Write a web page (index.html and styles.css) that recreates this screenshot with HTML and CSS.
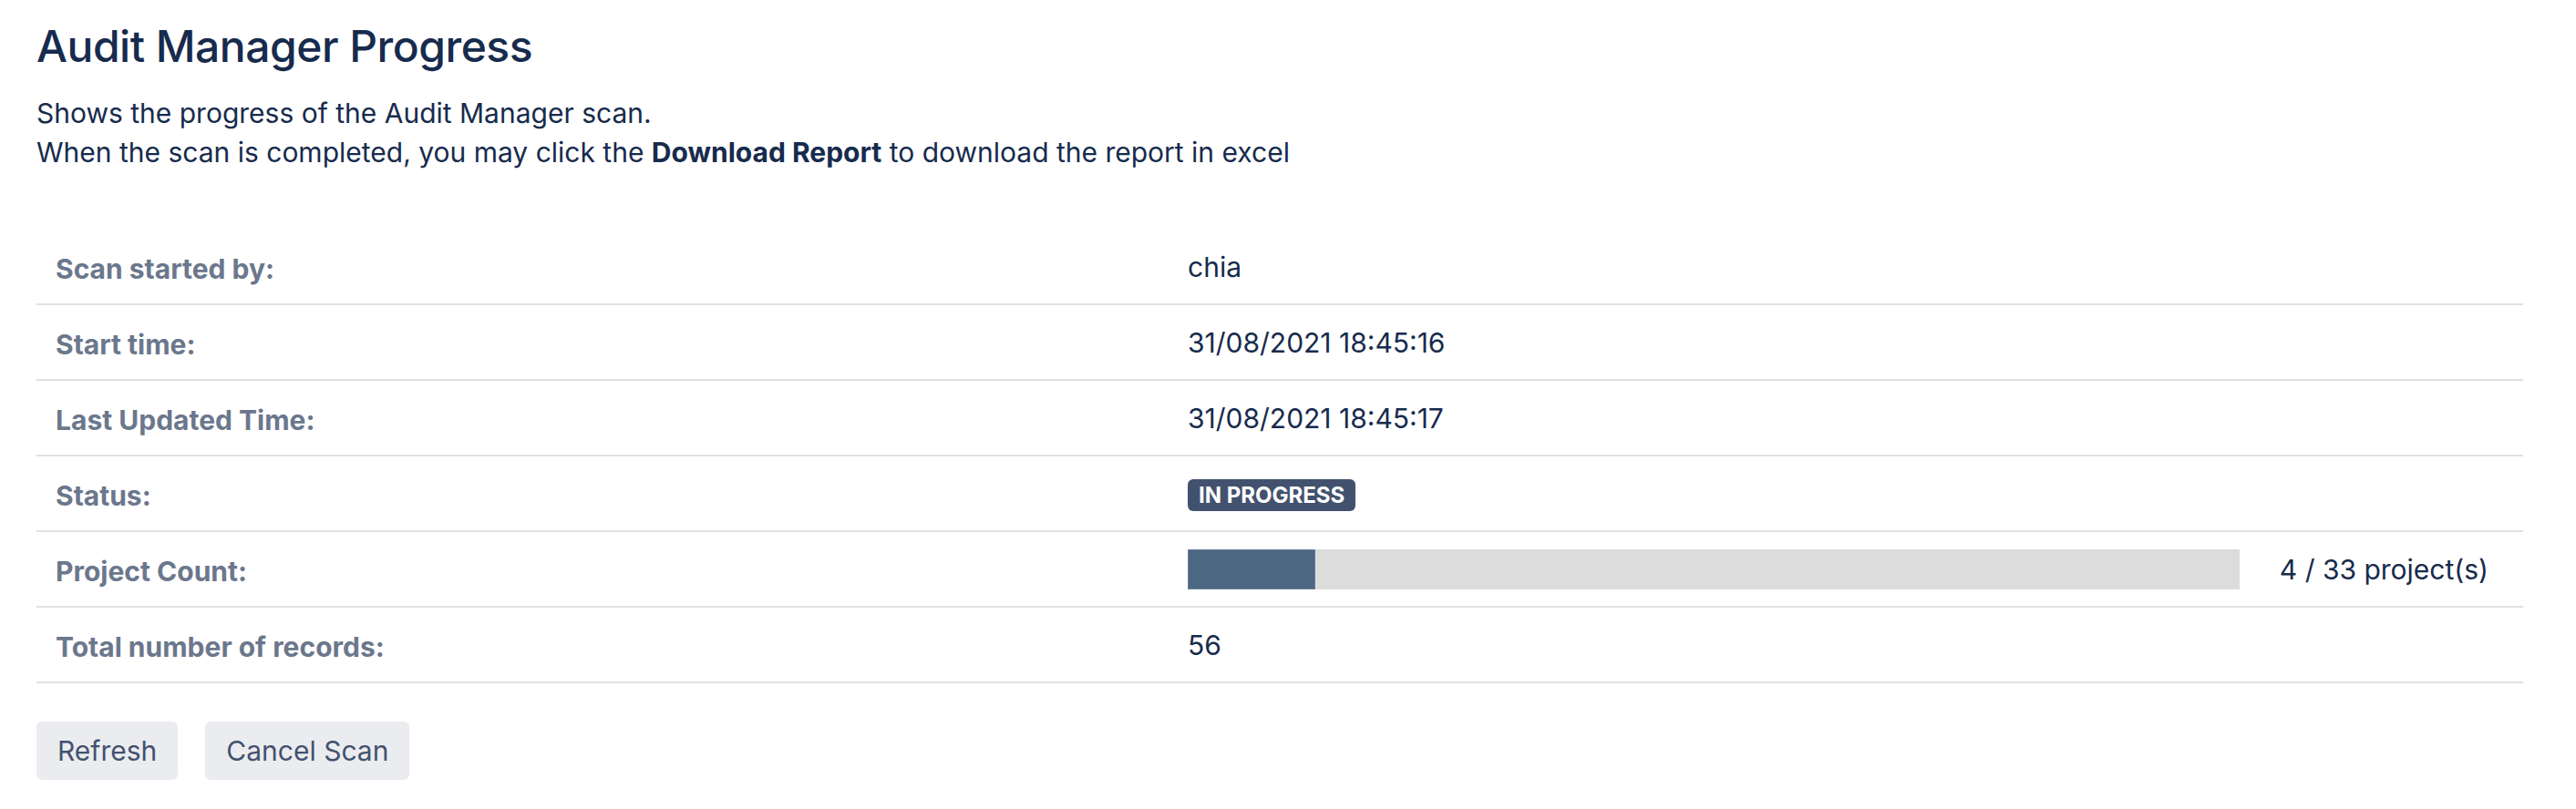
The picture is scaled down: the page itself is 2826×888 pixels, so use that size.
FILE: index.html
```html
<!DOCTYPE html>
<html lang="en">
<head>
    <meta charset="UTF-8">
    <meta name="viewport" content="width=device-width, initial-scale=1.0">
    <title>Audit Manager Progress</title>
    <link rel="stylesheet" href="styles.css">
</head>
<body>

    <div class="page">
        <h1>Audit Manager Progress</h1>
        <p class="intro">
            Shows the progress of the Audit Manager scan.<br>
            When the scan is completed, you may click the <b>Download Report</b> to download the report in excel
        </p>

        <table class="progress-table">
            <tbody>
                <tr>
                    <th>Scan started by:</th>
                    <td>chia</td>
                </tr>
                <tr>
                    <th>Start time:</th>
                    <td>31/08/2021 18:45:16</td>
                </tr>
                <tr>
                    <th>Last Updated Time:</th>
                    <td>31/08/2021 18:45:17</td>
                </tr>
                <tr>
                    <th>Status:</th>
                    <td><span class="lozenge">In Progress</span></td>
                </tr>
                <tr>
                    <th>Project Count:</th>
                    <td class="count-cell">
                        <div class="count">
                            <div class="bar"><div class="bar-fill" style="width: 12.12%"></div></div>
                            <span class="count-text">4 / 33 project(s)</span>
                        </div>
                    </td>
                </tr>
                <tr>
                    <th>Total number of records:</th>
                    <td>56</td>
                </tr>
            </tbody>
        </table>

        <div class="actions">
            <button class="btn">Refresh</button>
            <button class="btn">Cancel Scan</button>
        </div>
    </div>

</body>
</html>
```

FILE: styles.css
```css
body { margin: 0; font-family: Inter, "Noto Sans", sans-serif; color: #172B4D; background: #fff; }
.page { padding: 23px 58px 0 40px; }

h1 { font-size: 48px; font-weight: 500; line-height: 56px; margin: 0; letter-spacing: -0.5px; }
.intro { font-size: 30px; line-height: 43px; margin: 24px 0 0; }
.intro b { font-weight: 700; }

.progress-table { width: 100%; border-collapse: collapse; margin-top: 63px; }
.progress-table th, .progress-table td { height: 81px; padding: 0 21px; border-bottom: 2px solid #DFE1E6; font-size: 30px; text-align: left; vertical-align: middle; }
.progress-table th { width: 1200px; height: 77px; color: #6B778C; font-weight: 700; padding-top: 4px; }
.progress-table td { padding-right: 38px; }

.lozenge { display: inline-block; background: #42526E; color: #fff; font-size: 24px; font-weight: 700; text-transform: uppercase; line-height: 35px; padding: 0 12px; border-radius: 6px; vertical-align: middle; }

.count { display: flex; align-items: center; gap: 44px; }
.bar { flex: 1; height: 44px; background: #DCDCDC; }
.bar-fill { height: 100%; background: #4C6782; box-shadow: inset 0 0 0 1px #6A819A; }

.actions { display: flex; gap: 30px; margin-top: 42px; }
.btn { font-family: inherit; font-size: 30px; color: #42526E; background: #EBECF0; border: none; border-radius: 6px; height: 64px; padding: 0 23px; }
```
